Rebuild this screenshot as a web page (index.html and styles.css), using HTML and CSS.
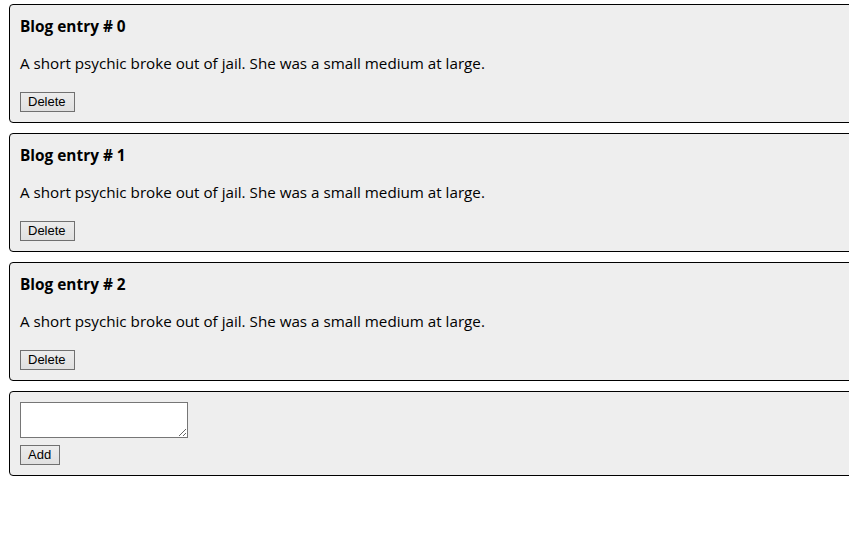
FILE: index.html
```html
<!DOCTYPE html>
<html>
<head>
<meta charset="utf-8">
<link rel="stylesheet" href="styles.css">
</head>
<body>
<div class="list">
  <div class="card">
    <div class="title">Blog entry # 0</div>
    <p class="text">A short psychic broke out of jail. She was a small medium at large.</p>
    <button class="btn">Delete</button>
  </div>
  <div class="card">
    <div class="title">Blog entry # 1</div>
    <p class="text">A short psychic broke out of jail. She was a small medium at large.</p>
    <button class="btn">Delete</button>
  </div>
  <div class="card">
    <div class="title">Blog entry # 2</div>
    <p class="text">A short psychic broke out of jail. She was a small medium at large.</p>
    <button class="btn">Delete</button>
  </div>
  <div class="card add-card">
    <textarea class="input"></textarea>
    <button class="btn">Add</button>
  </div>
</div>
</body>
</html>
```
FILE: styles.css
```css
html, body {
  margin: 0;
  padding: 0;
  overflow: hidden;
  background: #ffffff;
}
body {
  font-family: "Open Sans", "Noto Sans", sans-serif;
  color: #000;
}
.list {
  display: flex;
  flex-direction: column;
  gap: 10px;
  padding: 4px 0 0 9px;
  width: 900px;
}
.card {
  background: #eeeeee;
  border: 1px solid #000;
  border-radius: 4px;
  padding: 12px 10px 10px 10px;
}
.title {
  font-weight: bold;
  font-size: 15.4px;
  line-height: 20px;
  margin: 0 0 16px 0;
}
.text {
  font-size: 15.2px;
  line-height: 20px;
  margin: 0 0 19px 0;
}
.btn {
  display: block;
  font-family: "Liberation Sans", Arial, sans-serif;
  font-size: 13px;
  line-height: 16px;
  height: 20px;
  padding: 1px 8px 1px 7px;
  margin: 0;
  color: #000;
  background: linear-gradient(#ececec, #e0e0e0);
  border: 1px solid #707070;
  border-radius: 0;
}
.add-card {
  padding: 10px 10px 10px 10px;
}
.input {
  display: block;
  box-sizing: border-box;
  width: 168px;
  height: 36px;
  margin: 0 0 7px 0;
  border: 1px solid #767676;
  background: #fff;
  resize: both;
}
```
